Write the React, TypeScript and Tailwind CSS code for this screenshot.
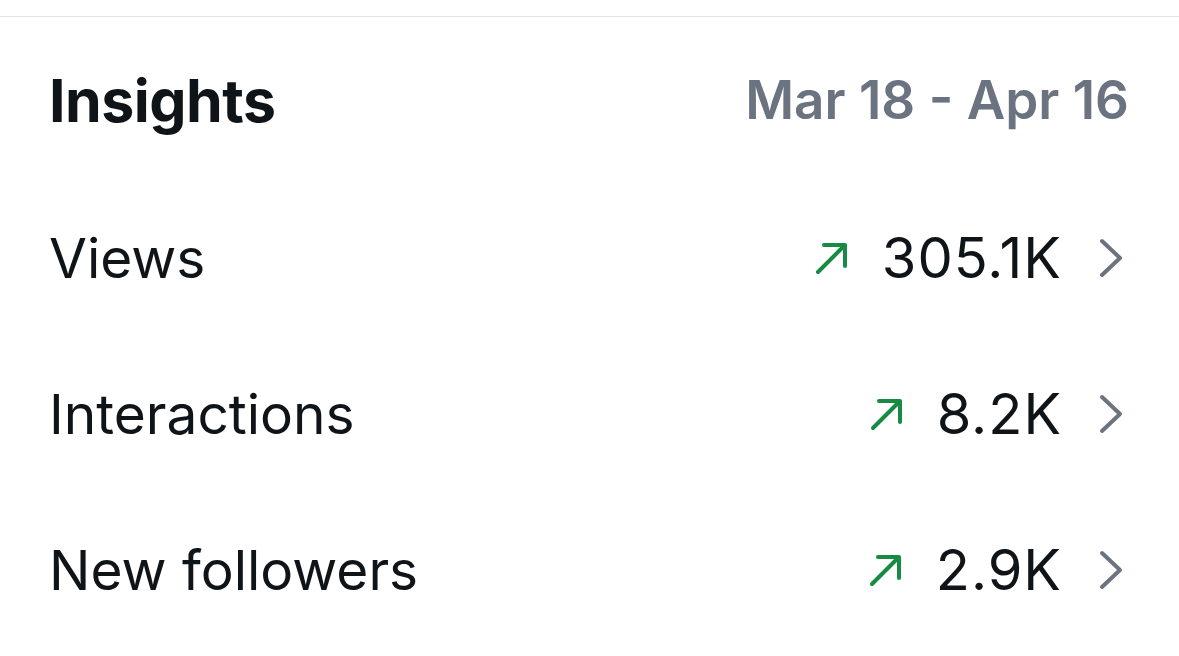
const rows = [
  { label: "Views", value: "305.1K" },
  { label: "Interactions", value: "8.2K" },
  { label: "New followers", value: "2.9K" },
];

function UpArrow() {
  return (
    <svg width="34" height="34" viewBox="0 0 34 34" fill="none" className="shrink-0">
      <path
        d="M3 31 L30 4 M9 4 H30 V25"
        stroke="#178a43"
        strokeWidth="4"
        strokeLinecap="round"
        strokeLinejoin="round"
      />
    </svg>
  );
}

function Chevron() {
  return (
    <svg width="26" height="42" viewBox="0 0 26 42" fill="none" className="shrink-0">
      <path
        d="M4 4 L22 21 L4 38"
        stroke="#6b7280"
        strokeWidth="4"
        strokeLinecap="round"
        strokeLinejoin="round"
      />
    </svg>
  );
}

export default function App() {
  return (
    <div className="min-h-screen bg-white text-[#0f1419]" style={{ fontFamily: "Inter, 'Noto Sans', sans-serif" }}>
      <div className="h-[16px]" />
      <div className="border-t border-[#e6e6e6]" />

      {/* Header */}
      <div className="flex h-[163px] items-center justify-between pl-[49px] pr-[50px] pt-[3px]">
        <span className="text-[59px] font-bold leading-none tracking-[-0.5px]">Insights</span>
        <span className="text-[53px] font-semibold leading-none text-[#6b7280]">Mar 18 - Apr 16</span>
      </div>

      {/* Metrics */}
      {rows.map((r) => (
        <div key={r.label} className="flex h-[156px] items-center justify-between pl-[49px] pr-[55px]">
          <span className="text-[55px] leading-none">{r.label}</span>
          <div className="flex items-center">
            <UpArrow />
            <span className="ml-[33px] text-[56px] leading-none tracking-[1px]">{r.value}</span>
            <span className="ml-[36px]">
              <Chevron />
            </span>
          </div>
        </div>
      ))}
    </div>
  );
}
